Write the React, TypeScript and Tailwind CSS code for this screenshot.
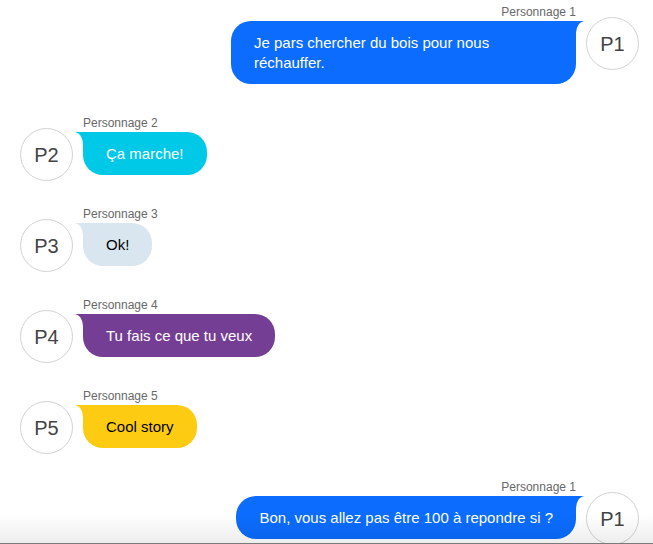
import React from 'react';

interface Message {
  id: number;
  author: string;
  avatar: string;
  text: string;
  mine?: boolean;
  bubble: string;
  tail: string;
}

const messages: Message[] = [
  { id: 1, author: 'Personnage 1', avatar: 'P1', text: 'Je pars chercher du bois pour nous réchauffer.', mine: true, bubble: 'bg-[#0b6cfd] text-white', tail: 'bg-[#0b6cfd]' },
  { id: 2, author: 'Personnage 2', avatar: 'P2', text: 'Ça marche!', bubble: 'bg-[#00c9e8] text-white', tail: 'bg-[#00c9e8]' },
  { id: 3, author: 'Personnage 3', avatar: 'P3', text: 'Ok!', bubble: 'bg-[#dae6ef] text-black', tail: 'bg-[#dae6ef]' },
  { id: 4, author: 'Personnage 4', avatar: 'P4', text: 'Tu fais ce que tu veux', bubble: 'bg-[#733e94] text-white', tail: 'bg-[#733e94]' },
  { id: 5, author: 'Personnage 5', avatar: 'P5', text: 'Cool story', bubble: 'bg-[#fecb13] text-black', tail: 'bg-[#fecb13]' },
  { id: 6, author: 'Personnage 1', avatar: 'P1', text: 'Bon, vous allez pas être 100 à repondre si ?', mine: true, bubble: 'bg-[#0b6cfd] text-white', tail: 'bg-[#0b6cfd]' },
];

const Avatar: React.FC<{ label: string }> = ({ label }) => (
  <div className="mt-[12px] -mb-[20px] flex h-[53px] w-[53px] shrink-0 items-center justify-center rounded-full border border-[#d2d2d2] bg-white text-[20px] text-[#444]">
    {label}
  </div>
);

const ChatMessage: React.FC<{ message: Message }> = ({ message }) => {
  const mine = message.mine;
  return (
    <div className={`mb-[32px] flex items-start gap-[10px] ${mine ? 'flex-row-reverse' : ''}`}>
      <Avatar label={message.avatar} />
      <div className={`flex flex-col ${mine ? 'items-end' : 'items-start'}`}>
        {/* Author */}
        <span className="mb-[2px] text-[12px] leading-[14px] text-[#686868]">
          {message.author}
        </span>

        {/* Bubble */}
        <div
          className={`relative max-w-[345px] rounded-[20px] px-[23px] pt-[12px] pb-[11px] text-[15px] leading-5 ${message.bubble} ${
            mine ? 'rounded-tr-none' : 'rounded-tl-none'
          }`}
        >
          <div className={`absolute top-0 h-[12px] w-[9px] ${message.tail} ${mine ? '-right-[9px]' : '-left-[9px]'}`}>
            <div className={`h-full w-full bg-white ${mine ? 'rounded-tl-[100%]' : 'rounded-tr-[100%]'}`} />
          </div>
          {message.text}
        </div>
      </div>
    </div>
  );
};

export default function App() {
  return (
    <div className="relative h-[544px] w-full overflow-hidden bg-white font-['Liberation_Sans',Arial,sans-serif]">
      <div className="pt-[5px] pl-[20px] pr-[14px]">
        {messages.map((m) => (
          <ChatMessage key={m.id} message={m} />
        ))}
      </div>

      {/* Bottom fade */}
      <div className="pointer-events-none absolute bottom-0 left-0 right-0 h-[30px] border-b border-[#7a7a7a] bg-linear-to-b from-transparent to-black/[0.07]" />
    </div>
  );
}
